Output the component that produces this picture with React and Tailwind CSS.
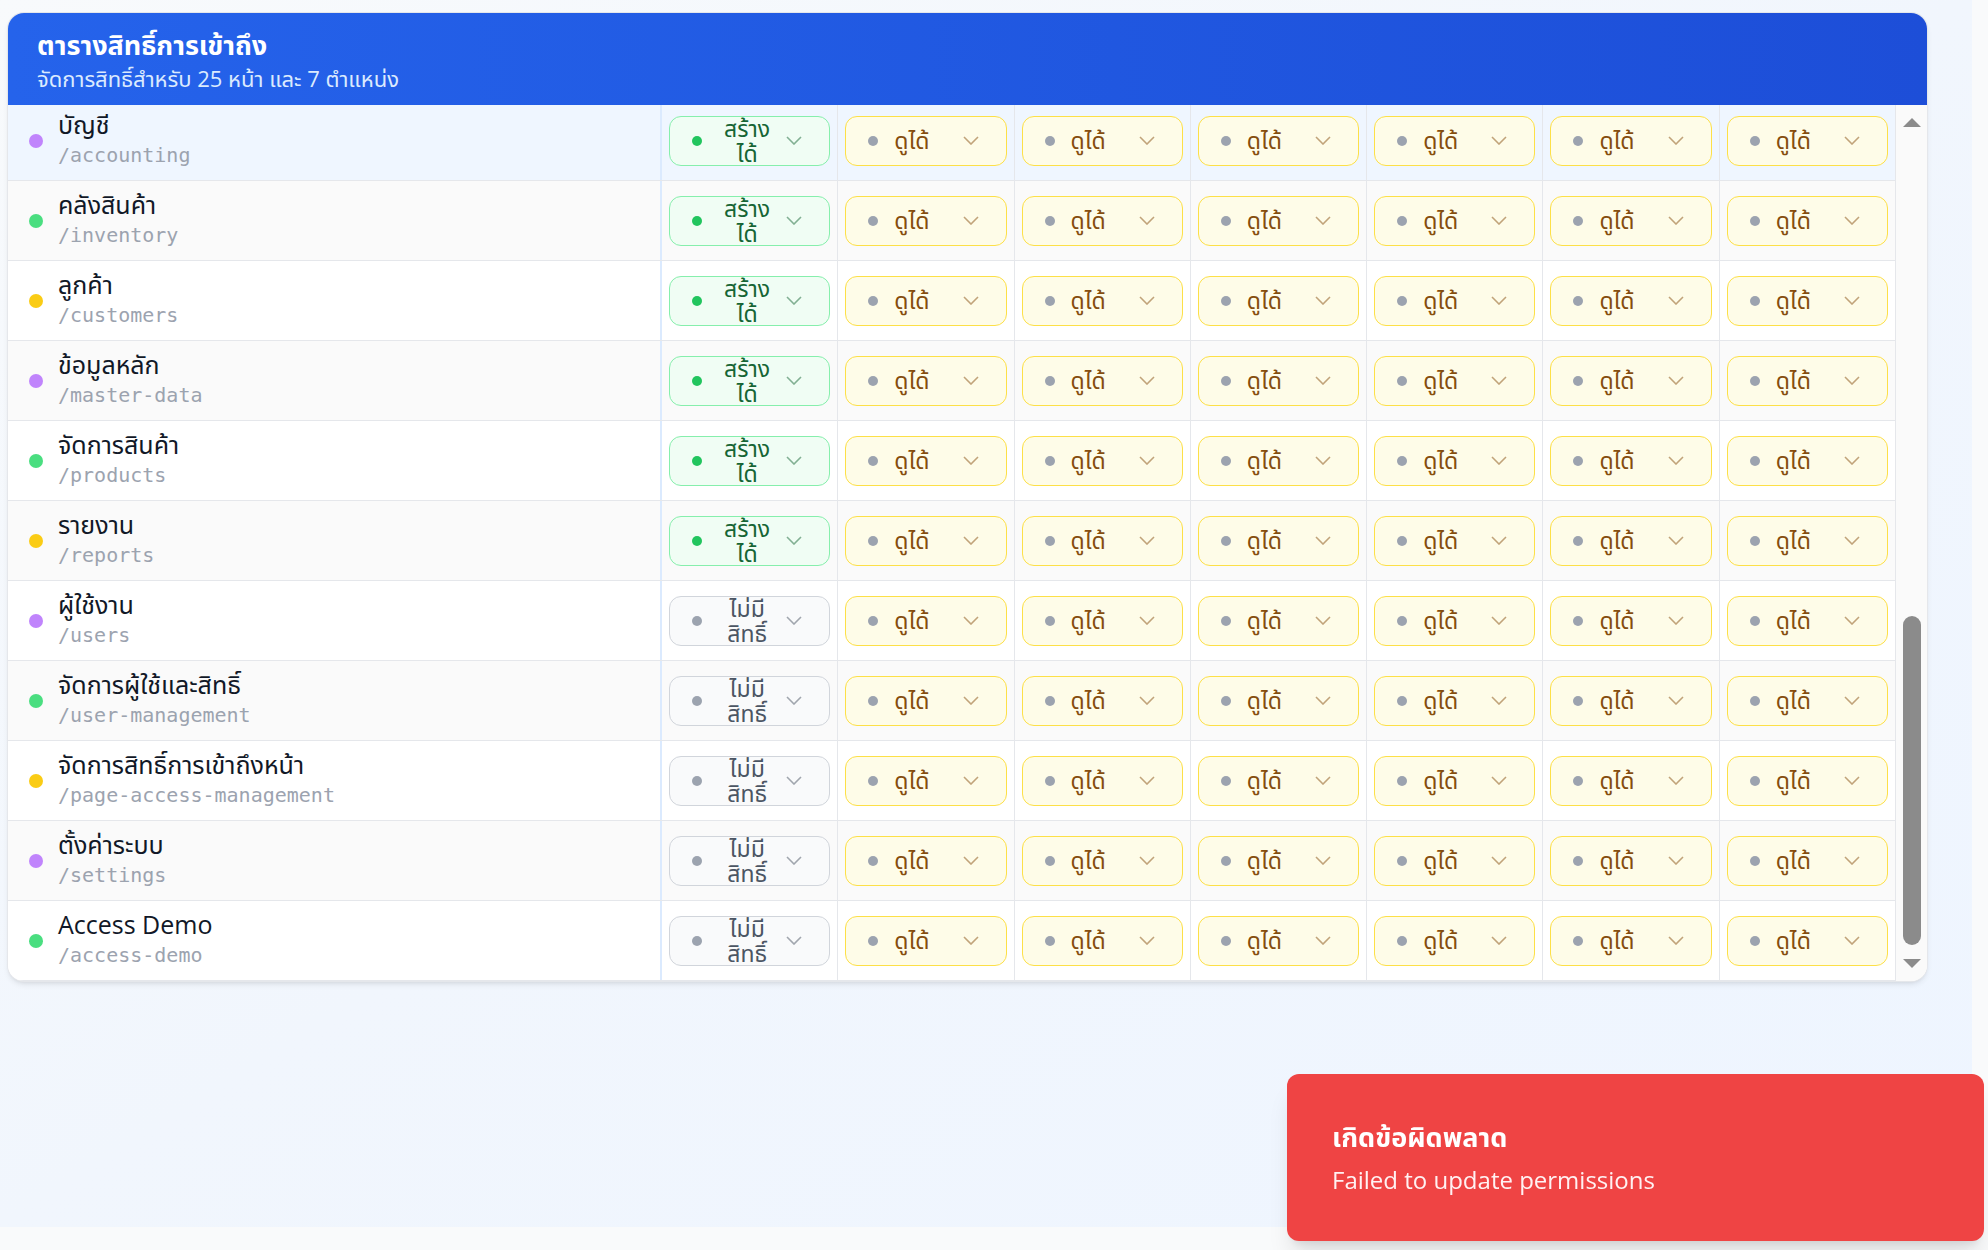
import { useLayoutEffect, useRef } from 'react';

const roles = [
  'ผู้ดูแลระบบ',
  'ผู้จัดการ',
  'พนักงานบัญชี',
  'พนักงานคลัง',
  'พนักงานขาย',
  'ผู้ตรวจสอบ',
  'ผู้ใช้ทั่วไป',
];

const pages = [
  { name: 'แดชบอร์ด', path: '/dashboard' },
  { name: 'หน้าแรก', path: '/home' },
  { name: 'คำสั่งซื้อ', path: '/orders' },
  { name: 'ใบเสนอราคา', path: '/quotations' },
  { name: 'ใบแจ้งหนี้', path: '/invoices' },
  { name: 'การชำระเงิน', path: '/payments' },
  { name: 'ผู้จำหน่าย', path: '/suppliers' },
  { name: 'จัดซื้อ', path: '/purchasing' },
  { name: 'การขาย', path: '/sales' },
  { name: 'พนักงาน', path: '/employees' },
  { name: 'เงินเดือน', path: '/payroll' },
  { name: 'โปรไฟล์', path: '/profile' },
  { name: 'การแจ้งเตือน', path: '/notifications' },
  { name: 'ปฏิทิน', path: '/calendar' },
  { name: 'บัญชี', path: '/accounting' },
  { name: 'คลังสินค้า', path: '/inventory' },
  { name: 'ลูกค้า', path: '/customers' },
  { name: 'ข้อมูลหลัก', path: '/master-data' },
  { name: 'จัดการสินค้า', path: '/products' },
  { name: 'รายงาน', path: '/reports' },
  { name: 'ผู้ใช้งาน', path: '/users' },
  { name: 'จัดการผู้ใช้และสิทธิ์', path: '/user-management' },
  { name: 'จัดการสิทธิ์การเข้าถึงหน้า', path: '/page-access-management' },
  { name: 'ตั้งค่าระบบ', path: '/settings' },
  { name: 'Access Demo', path: '/access-demo' },
];

const dotColors = ['bg-[#4ade80]', 'bg-[#facc15]', 'bg-[#c084fc]'];

const levels = {
  create: {
    lines: ['สร้าง', 'ได้'],
    chip: 'border-[#86efac] bg-[#f0fdf4] text-[#166534]',
    dot: 'bg-[#22c55e]',
  },
  view: {
    lines: ['ดูได้'],
    chip: 'border-[#fde047] bg-[#fefce8] text-[#854d0e]',
    dot: 'bg-[#9ca3af]',
  },
  none: {
    lines: ['ไม่มี', 'สิทธิ์'],
    chip: 'border-[#d1d5db] bg-[#f9fafb] text-[#4b5563]',
    dot: 'bg-[#9ca3af]',
  },
};

const font = "font-['Open_Sans','Noto_Sans_Thai','Leelawadee_UI','Tahoma','Garuda','Loma',sans-serif]";

function permissionFor(pageIndex, roleIndex) {
  if (roleIndex > 0) return 'view';
  return pageIndex < 20 ? 'create' : 'none';
}

function PermissionChip({ level }) {
  const l = levels[level];
  const wrapped = l.lines.length > 1;
  return (
    <button
      className={`flex h-[50px] w-full items-center rounded-[12px] border pl-[22px] pr-[27px] ${l.chip}`}
    >
      <span className={`h-[10px] w-[10px] shrink-0 rounded-full ${l.dot}`}></span>
      <span
        className={
          wrapped
            ? 'ml-[14px] mr-[8px] flex flex-1 flex-col items-center text-[23px] leading-[25px]'
            : 'ml-[16px] mr-auto flex flex-col items-center text-[23px] leading-[25px]'
        }
      >
        {l.lines.map((line) => (
          <span key={line}>{line}</span>
        ))}
      </span>
      <svg width="16" height="9" viewBox="0 0 16 9" className="shrink-0 opacity-50">
        <path d="M1 1l7 7 7-7" fill="none" stroke="currentColor" strokeWidth="1.6" />
      </svg>
    </button>
  );
}

export default function App() {
  const scrollRef = useRef(null);

  useLayoutEffect(() => {
    if (scrollRef.current) {
      scrollRef.current.scrollTop = scrollRef.current.scrollHeight;
    }
  }, []);

  return (
    <div className={`min-h-screen bg-[#f9fafb] ${font}`}>
      <div className="h-[1227px] w-[1972px] bg-gradient-to-br from-[#f8fafc] via-[#f1f6fd] to-[#eef5ff] pl-[8px] pt-[13px]">
        <div className="w-[1919px] overflow-hidden rounded-2xl bg-white shadow-md ring-1 ring-[#e5e7eb]">
          <div className="h-[92px] bg-gradient-to-r from-[#2563eb] to-[#1d4ed8] px-[29px] pt-[16px]">
            <div className="text-[27px] font-bold leading-[32px] text-white">
              ตารางสิทธิ์การเข้าถึง
            </div>
            <div className="mt-[3px] text-[22px] leading-[28px] text-[#dbeafe]">
              จัดการสิทธิ์สำหรับ 25 หน้า และ 7 ตำแหน่ง
            </div>
          </div>

          <div className="flex h-[876px]">
            <div
              ref={scrollRef}
              className="flex-1 overflow-y-auto [scrollbar-width:none]"
            >
              <div className="grid h-[72px] grid-cols-[654px_repeat(7,minmax(0,1fr))] border-b border-[#e5e7eb] bg-[#f9fafb] text-[18px] font-semibold text-[#374151]">
                <div className="flex items-center border-r-2 border-[#dbeafe] pl-[21px]">หน้า</div>
                {roles.map((role) => (
                  <div key={role} className="flex items-center justify-center border-r border-[#e5e7eb]">
                    {role}
                  </div>
                ))}
              </div>
              {pages.map((page, i) => (
                <div
                  key={page.path}
                  className={`grid h-[80px] grid-cols-[654px_repeat(7,minmax(0,1fr))] border-b border-[#e5e7eb] ${
                    i === 14 ? 'bg-[#eff6ff]' : i % 2 === 1 ? 'bg-[#fafafa]' : 'bg-white'
                  }`}
                >
                  <div className="flex items-center border-r-2 border-[#dbeafe] pl-[21px]">
                    <span className={`h-[14px] w-[14px] shrink-0 rounded-full ${dotColors[i % 3]}`}></span>
                    <div className="ml-[15px] pb-[4px]">
                      <div className="text-[25px] leading-[30px] text-[#111827]">{page.name}</div>
                      <div className="mt-[3px] font-['DejaVu_Sans_Mono',monospace] text-[20px] leading-[26px] text-[#9ca3af]">
                        {page.path}
                      </div>
                    </div>
                  </div>
                  {roles.map((role, r) => (
                    <div key={role} className="flex items-center border-r border-[#e5e7eb] px-[7px]">
                      <PermissionChip level={permissionFor(i, r)} />
                    </div>
                  ))}
                </div>
              ))}
            </div>

            <div className="flex w-[31px] flex-col items-center bg-[#fafafa]">
              <svg width="18" height="9" viewBox="0 0 18 9" className="mt-[13px]">
                <polygon points="9,0 18,9 0,9" fill="#8b8b8b" />
              </svg>
              <div className="mt-[489px] h-[329px] w-[18px] rounded-full bg-[#8b8b8b]"></div>
              <svg width="18" height="9" viewBox="0 0 18 9" className="mt-[14px]">
                <polygon points="0,0 18,0 9,9" fill="#8b8b8b" />
              </svg>
            </div>
          </div>
        </div>
      </div>

      <div className="fixed bottom-[9px] right-[4px] flex h-[167px] w-[697px] flex-col justify-center rounded-[12px] bg-[#ef4444] pl-[45px] text-white shadow-xl">
        <div className="text-[27px] font-bold leading-[34px]">เกิดข้อผิดพลาด</div>
        <div className="mt-[10px] text-[24px] leading-[32px] text-[#fff1f2]">
          Failed to update permissions
        </div>
      </div>
    </div>
  );
}
